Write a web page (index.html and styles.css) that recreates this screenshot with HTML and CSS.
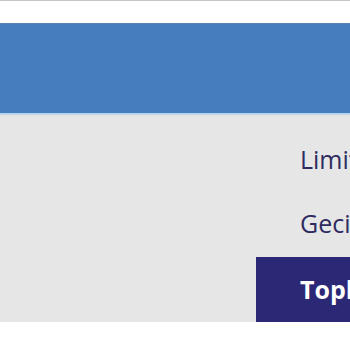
FILE: index.html
```html
<!DOCTYPE html>
<html lang="tr">
	<head>
		<meta charset="UTF-8" />
		<meta name="viewport" content="width=device-width, initial-scale=1.0" />
		<title>Limitler</title>
		<link rel="stylesheet" href="styles.css">
	</head>
	<body>
		<div id="topbar"></div>
		<div id="banner"></div>
		<div id="content">
			<ul class="menu">
				<li class="menu-item">Limitler</li>
				<li class="menu-item">Gecikmeler</li>
				<li class="menu-item active">Toplam</li>
			</ul>
		</div>
	</body>
</html>
```

FILE: styles.css
```css
body {
	margin: 0;
	overflow: hidden;
	font-family: "Open Sans", "DejaVu Sans", sans-serif;
	background-color: #ffffff;
}
#topbar {
	height: 22px;
	border-top: 1px solid #c6c6c6;
	background-color: #ffffff;
}
#banner {
	height: 89px;
	background-color: #467dbf;
	border-top: 1px solid #5a83b3;
	border-bottom: 2px solid #b9d6ee;
}
#content {
	background-color: #e6e6e6;
	padding-top: 12px;
	overflow: hidden;
}
.menu {
	list-style: none;
	margin: 0 0 0 256px;
	padding: 0;
	width: 320px;
}
.menu-item {
	padding-left: 44px;
	height: 64px;
	line-height: 64px;
	font-size: 25px;
	color: #2d2b5f;
	white-space: nowrap;
}
.menu-item.active {
	margin-top: 2px;
	height: 65px;
	line-height: 65px;
	background-color: #2b2876;
	color: #ffffff;
	font-weight: bold;
}
```
